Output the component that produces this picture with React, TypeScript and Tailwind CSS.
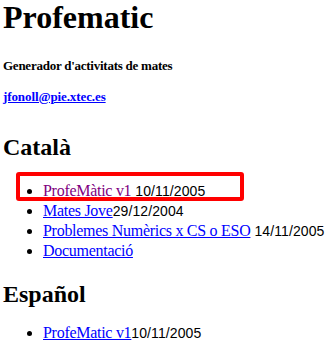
const serif = "font-['Liberation_Serif','Times_New_Roman',serif]"

const catala = [
  { label: "ProfeMàtic v1", date: " 10/11/2005", visited: true },
  { label: "Mates Jove", date: "29/12/2004" },
  { label: "Problemes Numèrics x CS o ESO", date: " 14/11/2005" },
  { label: "Documentació", date: "" },
]

const Row = ({ label, date, visited }: { label: string; date: string; visited?: boolean }) => (
  <li className="h-[20px] leading-[20px] whitespace-nowrap">
    <a href="#" className={`underline tracking-[-0.28px] ${visited ? "text-[#800080]" : "text-[#0000ff]"}`}>
      {label}
    </a>
    {date && (
      <span className="text-[14px] leading-none tracking-[0.1px] font-['Liberation_Sans',Arial,sans-serif] whitespace-pre">{date}</span>
    )}
  </li>
)

export default function App() {
  return (
    <div className={`relative bg-white text-black min-h-[351px] w-[329px] overflow-hidden pl-[3px] ${serif}`}>
      <h1 className="text-[32px] leading-[35px] font-bold">Profematic</h1>
      <h5 className="mt-[23px] text-[13px] leading-[16px] font-bold tracking-[-0.25px]">Generador d'activitats de mates</h5>
      <p className="mt-[15px] text-[13px] leading-[16px] font-bold tracking-[-0.1px]">
        <a href="#" className="text-[#0000ff] underline">jfonoll@pie.xtec.es</a>
      </p>

      <h2 className="mt-[28px] text-[24px] leading-[28px] font-bold">Català</h2>
      <ul className="mt-[20px] list-disc pl-[40px] text-[16px]">
        {catala.map((r, i) => (
          <Row key={i} {...r} />
        ))}
      </ul>

      <h2 className="mt-[19px] text-[24px] leading-[28px] font-bold">Español</h2>
      <ul className="mt-[15px] list-disc pl-[40px] text-[16px]">
        <Row label="ProfeMatic v1" date="10/11/2005" />
      </ul>

      {/* highlight box */}
      <div className="absolute left-[16px] top-[172px] w-[228px] h-[29px] border-4 border-[#ff0000] rounded-[3px]" />
    </div>
  )
}
